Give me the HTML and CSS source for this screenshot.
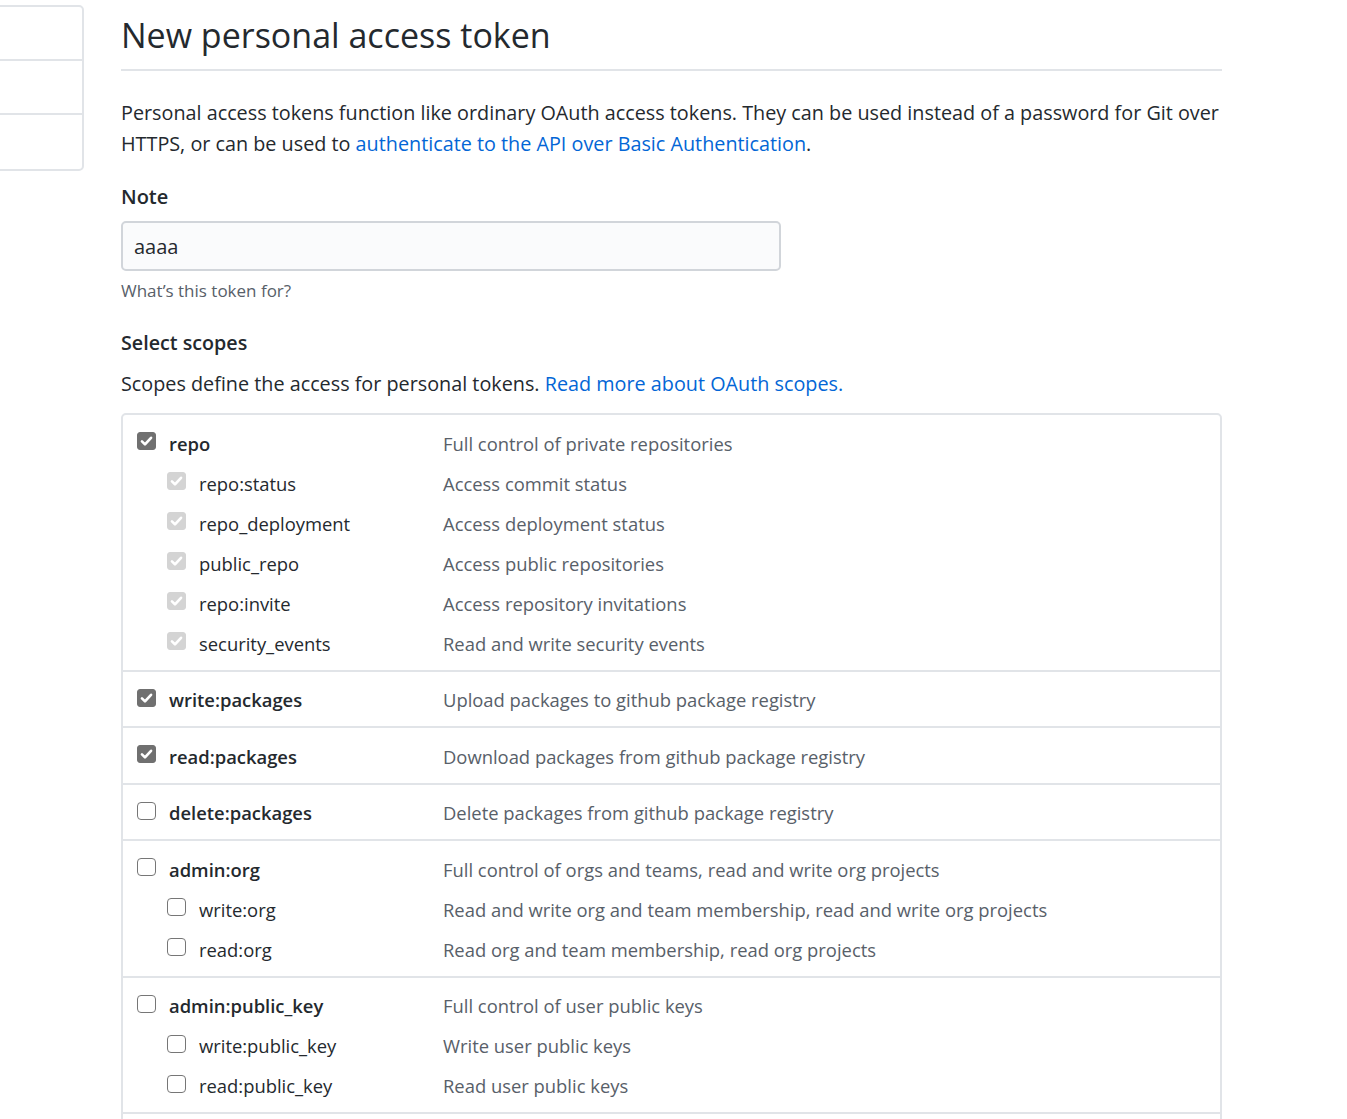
FILE: index.html
```html
<!DOCTYPE html>
<html lang="en">
<head>
<meta charset="utf-8">
<title>New personal access token</title>
<link rel="stylesheet" href="styles.css">
</head>
<body>
<div class="page">
  <nav class="sidebar">
    <div class="side-item"></div>
    <div class="side-item"></div>
    <div class="side-item"></div>
  </nav>
  <main class="main">
    <div class="subhead"><h2 class="subhead-title">New personal access token</h2></div>
    <p class="intro">Personal access tokens function like ordinary OAuth access tokens. They can be used instead of a password for Git over HTTPS, or can be used to <a href="#" class="link">authenticate to the API over Basic Authentication</a>.</p>
    <form class="token-form">
      <label class="field-label" for="note">Note</label>
      <input class="field-input" id="note" type="text" value="aaaa">
      <p class="field-note">What’s this token for?</p>
      <h3 class="scopes-title">Select scopes</h3>
      <p class="scopes-desc">Scopes define the access for personal tokens. <a href="#" class="link">Read more about OAuth scopes.</a></p>
      <div class="scopes">
        <div class="group">
          <div class="row"><div class="name"><span class="cb checked"><svg viewBox="0 0 18 18"><path d="M4.2 9.4l3.2 3.2 6.4-7"/></svg></span><span class="label main-label">repo</span></div><span class="desc">Full control of private repositories</span></div>
          <div class="row sub"><div class="name"><span class="cb disabled"><svg viewBox="0 0 18 18"><path d="M4.2 9.4l3.2 3.2 6.4-7"/></svg></span><span class="label">repo:status</span></div><span class="desc">Access commit status</span></div>
          <div class="row sub"><div class="name"><span class="cb disabled"><svg viewBox="0 0 18 18"><path d="M4.2 9.4l3.2 3.2 6.4-7"/></svg></span><span class="label">repo_deployment</span></div><span class="desc">Access deployment status</span></div>
          <div class="row sub"><div class="name"><span class="cb disabled"><svg viewBox="0 0 18 18"><path d="M4.2 9.4l3.2 3.2 6.4-7"/></svg></span><span class="label">public_repo</span></div><span class="desc">Access public repositories</span></div>
          <div class="row sub"><div class="name"><span class="cb disabled"><svg viewBox="0 0 18 18"><path d="M4.2 9.4l3.2 3.2 6.4-7"/></svg></span><span class="label">repo:invite</span></div><span class="desc">Access repository invitations</span></div>
          <div class="row sub"><div class="name"><span class="cb disabled"><svg viewBox="0 0 18 18"><path d="M4.2 9.4l3.2 3.2 6.4-7"/></svg></span><span class="label">security_events</span></div><span class="desc">Read and write security events</span></div>
        </div>
        <div class="group">
          <div class="row"><div class="name"><span class="cb checked"><svg viewBox="0 0 18 18"><path d="M4.2 9.4l3.2 3.2 6.4-7"/></svg></span><span class="label main-label">write:packages</span></div><span class="desc">Upload packages to github package registry</span></div>
        </div>
        <div class="group">
          <div class="row"><div class="name"><span class="cb checked"><svg viewBox="0 0 18 18"><path d="M4.2 9.4l3.2 3.2 6.4-7"/></svg></span><span class="label main-label">read:packages</span></div><span class="desc">Download packages from github package registry</span></div>
        </div>
        <div class="group">
          <div class="row"><div class="name"><span class="cb"></span><span class="label main-label">delete:packages</span></div><span class="desc">Delete packages from github package registry</span></div>
        </div>
        <div class="group">
          <div class="row"><div class="name"><span class="cb"></span><span class="label main-label">admin:org</span></div><span class="desc">Full control of orgs and teams, read and write org projects</span></div>
          <div class="row sub"><div class="name"><span class="cb"></span><span class="label">write:org</span></div><span class="desc">Read and write org and team membership, read and write org projects</span></div>
          <div class="row sub"><div class="name"><span class="cb"></span><span class="label">read:org</span></div><span class="desc">Read org and team membership, read org projects</span></div>
        </div>
        <div class="group">
          <div class="row"><div class="name"><span class="cb"></span><span class="label main-label">admin:public_key</span></div><span class="desc">Full control of user public keys</span></div>
          <div class="row sub"><div class="name"><span class="cb"></span><span class="label">write:public_key</span></div><span class="desc">Write user public keys</span></div>
          <div class="row sub"><div class="name"><span class="cb"></span><span class="label">read:public_key</span></div><span class="desc">Read user public keys</span></div>
        </div>
        <div class="group">
          <div class="row"><div class="name"><span class="cb"></span><span class="label main-label">admin:repo_hook</span></div><span class="desc">Full control of repository hooks</span></div>
          <div class="row sub"><div class="name"><span class="cb"></span><span class="label">write:repo_hook</span></div><span class="desc">Write repository hooks</span></div>
          <div class="row sub"><div class="name"><span class="cb"></span><span class="label">read:repo_hook</span></div><span class="desc">Read repository hooks</span></div>
        </div>
      </div>
    </form>
  </main>
</div>
</body>
</html>
```

FILE: styles.css
```css
* { box-sizing: border-box; }

body {
  margin: 0;
  background: #fff;
  color: #24292e;
  font-family: "Open Sans", "Noto Sans", "Liberation Sans", sans-serif;
  font-size: 19.8px;
}

.page {
  display: flex;
  align-items: flex-start;
  gap: 37px;
  padding-top: 5px;
}

.sidebar {
  flex: none;
  width: 100px;
  margin-left: -16px;
  border: 2px solid #e1e4e8;
  border-radius: 5px;
}

.side-item {
  height: 54px;
  border-bottom: 2px solid #e1e4e8;
}

.side-item:last-child { border-bottom: 0; }

.main {
  flex: none;
  width: 1101px;
}

.subhead {
  margin-top: 5px;
  padding-bottom: 8px;
  border-bottom: 2px solid #e1e4e8;
}

.subhead-title {
  margin: 0;
  font-size: 34px;
  line-height: 51px;
  font-weight: 400;
}

.intro {
  margin: 26px 0 0;
  line-height: 31px;
}

.link {
  color: #0366d6;
  text-decoration: none;
}

.token-form { margin: 0; }

.field-label {
  display: block;
  margin-top: 23px;
  line-height: 30px;
  font-size: 20px;
  font-weight: 600;
}

.field-input {
  display: block;
  margin-top: 9px;
  width: 660px;
  height: 50px;
  padding: 0 11px;
  border: 2px solid #d1d5da;
  border-radius: 5px;
  background: #fafbfc;
  color: #24292e;
  font: inherit;
  font-size: 20px;
  outline: none;
}

.field-note {
  margin: 8px 0 0;
  font-size: 17px;
  line-height: 24px;
  color: #586069;
}

.scopes-title {
  margin: 25px 0 0;
  font-size: 19.7px;
  line-height: 30px;
  font-weight: 600;
}

.scopes-desc {
  margin: 9.5px 0 0;
  line-height: 31px;
}

.scopes {
  margin-top: 14.5px;
  border: 2px solid #e1e4e8;
  border-radius: 5px;
  font-size: 18.4px;
}

.group {
  padding: 8px 14px 6.5px;
}

.group + .group {
  border-top: 2px solid #e1e4e8;
}

.row {
  display: flex;
  align-items: center;
  height: 40px;
}

.name {
  flex: none;
  width: 306px;
  display: flex;
  align-items: center;
  gap: 13px;
}

.row.sub .name { padding-left: 30px; }

.label { white-space: nowrap; }

.main-label { font-weight: 600; }

.desc {
  color: #586069;
  white-space: nowrap;
}

.cb {
  flex: none;
  width: 19px;
  height: 18px;
  margin-bottom: 4px;
  border: 1.5px solid #767676;
  border-radius: 4px;
  background: #fff;
  display: flex;
  align-items: center;
  justify-content: center;
}

.cb svg {
  width: 18px;
  height: 18px;
  fill: none;
  stroke: #fff;
  stroke-width: 2.8;
  stroke-linecap: round;
  stroke-linejoin: round;
}

.cb.checked {
  background: #707070;
  border-color: #707070;
  border-radius: 3px;
}

.cb.disabled {
  background: #d4d4d4;
  border-color: #d4d4d4;
  border-radius: 3px;
}
```
